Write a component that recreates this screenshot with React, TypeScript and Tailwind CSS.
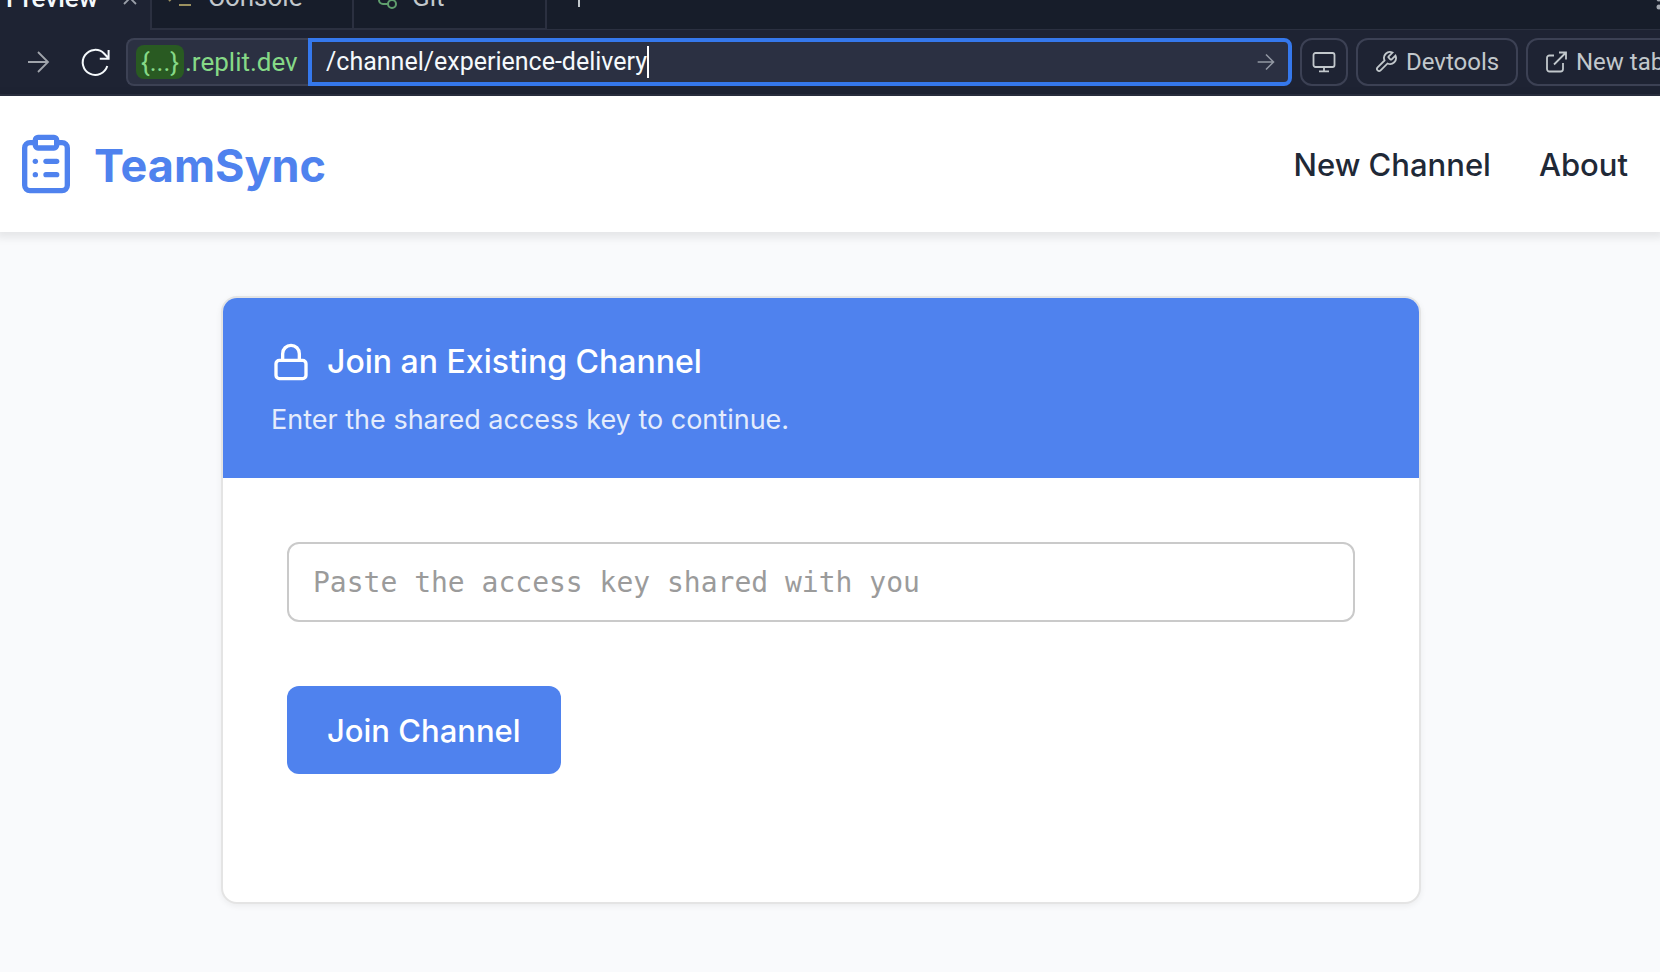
import React from 'react';
import { ClipboardList, Lock } from 'lucide-react';

function Stroke({ d, className, width = 2 }: { d: string; className: string; width?: number }) {
  return (
    <svg viewBox="0 0 24 24" fill="none" stroke="currentColor" strokeWidth={width} className={`shrink-0 ${className}`} aria-hidden="true">
      <path d={d} />
    </svg>
  );
}

function Tabs() {
  const tab = 'flex h-16 shrink-0 items-center border-r-2 border-b-2 border-[#2b3040] text-[#c2c8cc]';
  return (
    <div className="-mt-[34px] flex h-16 overflow-hidden bg-[#171d2a] text-[26px]">
      <div className="flex w-[152px] shrink-0 items-center border-r-2 border-[#2b3040] bg-[#1e2333] pr-2 pl-[6px] font-medium text-[#f5f9fc]">
        <span className="flex-1">Preview</span>
        <button type="button" aria-label="Close Preview" className="text-[#9a9fa8]">
          <Stroke className="size-6" width={1.8} d="M18 6 6 18M6 6l12 12" />
        </button>
      </div>
      <button type="button" className={`${tab} w-[202px] gap-4 pl-4`}>
        <Stroke className="size-6 text-[#9c9160]" d="m1 16 6-6-6-6M11 20h12" />
        Console
      </button>
      <button type="button" className={`${tab} w-[193px] gap-3 pl-[22px]`}>
        <svg viewBox="0 0 24 24" fill="none" stroke="currentColor" strokeWidth="2" className="size-6 shrink-0 text-[#5f9e6d]" aria-hidden="true">
          <circle cx="6" cy="4" r="3" />
          <path d="M3 7v8a4 4 0 0 0 4 4h5" />
          <circle cx="16" cy="19" r="4" />
        </svg>
        Git
      </button>
      <div className="flex flex-1 items-center justify-between border-b border-[#2b3040] pl-5 text-[#c2c8cc]">
        <button type="button" aria-label="New pane">
          <Stroke className="size-6" d="M12 3v18M3 12h18" />
        </button>
        <button type="button" aria-label="More" className="pt-5 text-[#a5aab2]">
          <svg viewBox="0 0 4 24" className="h-6 w-1" fill="currentColor" aria-hidden="true">
            <circle cx="3" cy="3" r="2.5" />
            <circle cx="3" cy="11" r="2.5" />
          </svg>
        </button>
      </div>
    </div>
  );
}

function Toolbar() {
  const button = 'flex h-12 shrink-0 items-center rounded-xl border-2 border-[#3c4154] text-2xl text-[#c2c8cc]';
  return (
    <div className="flex h-[66px] items-center gap-2 overflow-hidden border-b-2 border-[#2b3040] bg-[#1e2333]">
      <div className="flex w-[118px] shrink-0 items-center justify-between pr-[7px] pl-[26px]">
        <button type="button" aria-label="Forward" className="text-[#a0a4ab]">
          <Stroke className="size-6" width={1.8} d="M2 12h20M12 2l10 10-10 10" />
        </button>
        <button type="button" aria-label="Reload" className="text-[#f5f9fc]">
          <Stroke className="size-8" width={1.5} d="M21.2 15A9.4 9.4 0 1 1 18.8 5.6L22 9M22.2 3v6.6H15.6" />
        </button>
      </div>
      <div className="flex h-12 min-w-0 flex-1">
        <div className="flex w-[182px] shrink-0 items-center rounded-l-lg border-y-2 border-l-2 border-[#3c4154] bg-[#2b3042] pl-2 text-[26px] text-[#86d987]">
          <span className="mr-px flex h-[34px] w-12 items-center justify-center rounded-lg bg-[#295a22]">{'{...}'}</span>
          <span>.replit.dev</span>
        </div>
        <div className="flex min-w-0 flex-1 items-center rounded-r-lg border-4 border-[#3578ec] bg-[#2b3042] pr-3 pl-[14px]">
          <label className="flex min-w-0 flex-1 items-center">
            <span className="sr-only">Path</span>
            <input type="text" defaultValue="/channel/experience-delivery" className="field-sizing-content min-w-0 bg-transparent text-[25px] text-[#f5f9fc] outline-none" />
            <span className="h-8 w-[2px] shrink-0 bg-white" />
          </label>
          <button type="button" aria-label="Go" className="text-[#9298a3]">
            <Stroke className="size-5" width={1.9} d="M2 12h19M12 3l9 9-9 9" />
          </button>
        </div>
      </div>
      <button type="button" aria-label="Device" className={`${button} w-12 justify-center`}>
        <svg viewBox="0 0 24 24" fill="none" stroke="currentColor" strokeWidth="1.8" className="size-6" aria-hidden="true">
          <rect x="1.5" y="3" width="21" height="14" rx="2" />
          <path d="M12 17v4M7 21.3h10" />
        </svg>
      </button>
      <button type="button" className={`${button} w-[162px] gap-2 pl-4`}>
        <Stroke className="size-6" width={1.8} d="M14.7 6.3a1 1 0 0 0 0 1.4l1.6 1.6a1 1 0 0 0 1.4 0l3.77-3.77a6 6 0 0 1-7.94 7.94l-6.91 6.91a2.12 2.12 0 0 1-3-3l6.91-6.91a6 6 0 0 1 7.94-7.94l-3.76 3.76z" />
        Devtools
      </button>
      <button type="button" className={`${button} -mr-[34px] w-[168px] gap-2 pl-4 whitespace-nowrap`}>
        <Stroke className="size-6" width={1.8} d="M19 13v6a2.5 2.5 0 0 1-2.5 2.5h-11A2.5 2.5 0 0 1 3 19V8a2.5 2.5 0 0 1 2.500-2.500H10M15 2.500h7v7M10 14.500 22 2.500" />
        New tab
      </button>
    </div>
  );
}

export default function App() {
  return (
    <div className="flex min-h-screen flex-col overflow-hidden bg-[#f9fafc] font-['Inter',sans-serif]">
      <div className="font-['Roboto',sans-serif]">
        <Tabs />
        <Toolbar />
      </div>

      <header className="flex h-[136px] items-center justify-between bg-white pr-8 pl-[14px] shadow-[0_2px_8px_4px_rgba(0,0,0,0.08)]">
        <a href="#home" className="flex items-center gap-4 text-[45px] font-bold text-[#4f82ee]">
          <ClipboardList className="size-16" />
          <span className="pt-1">TeamSync</span>
        </a>
        <nav className="flex gap-12 pt-0.5 text-[31px] leading-10 font-medium text-[#1f2937]">
          <a href="#new">New Channel</a>
          <a href="#about">About</a>
        </nav>
      </header>

      <main className="pt-16 pr-[239px] pl-[221px]">
        <section className="overflow-hidden rounded-2xl border-2 border-[#e4e4e4] bg-white shadow-[0_2px_6px_rgba(0,0,0,0.06)]">
          <div className="bg-[#4f82ee] px-12 pt-10 pb-9 text-white">
            <h1 className="flex items-center gap-4 text-[32px] leading-[48px] font-medium">
              <Lock className="size-10" />
              Join an Existing Channel
            </h1>
            <p className="pt-3 text-[27px] leading-[44px] opacity-85">Enter the shared access key to continue.</p>
          </div>
          <form className="px-16 pt-16 pb-32" onSubmit={(e) => e.preventDefault()}>
            <label>
              <span className="sr-only">Access key</span>
              <input
                type="text"
                placeholder="Paste the access key shared with you"
                className="block h-20 w-full rounded-xl border-2 border-[#cacaca] bg-white px-6 font-['DejaVu_Sans_Mono',monospace] text-[28px] outline-none placeholder:text-[#9b9b9b]"
              />
            </label>
            <button type="submit" className="mt-16 h-[88px] rounded-xl bg-[#4f82ee] px-10 pt-0.5 text-[31px] font-medium text-white">
              Join Channel
            </button>
          </form>
        </section>
      </main>
    </div>
  );
}
